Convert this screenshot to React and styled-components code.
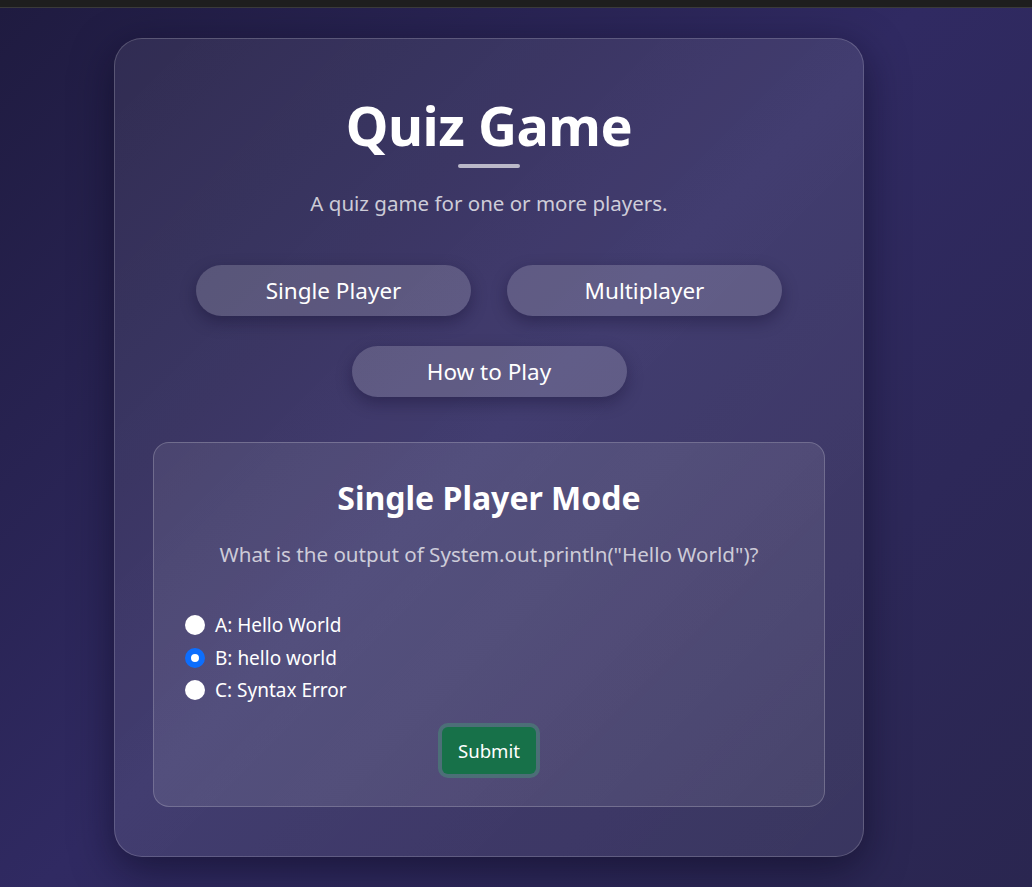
import React, { useState } from 'react'
import styled, { createGlobalStyle } from 'styled-components'

const GlobalStyle = createGlobalStyle`
  html, body {
    margin: 0;
    padding: 0;
    height: 100%;
    overflow: hidden;
  }
  body {
    font-family: "Noto Sans", "Open Sans", sans-serif;
    background: #1e1e1e;
  }
`;

const TopBar = styled.div`
  height: 7px;
  background: #1e1e1e;
  border-bottom: 1px solid #3a3a3a;
`;

const Page = styled.div`
  height: 879px;
  background: linear-gradient(135deg, #1f1b40 0%, #302a62 48%, #2a2650 100%);
  padding-top: 30px;
  box-sizing: border-box;
  overflow: hidden;
`;

const Card = styled.div`
  width: 750px;
  margin-left: 114px;
  box-sizing: border-box;
  padding: 54px 38px 49px;
  border-radius: 28px;
  border: 1px solid rgba(255, 255, 255, 0.18);
  background: linear-gradient(135deg, rgba(255,255,255,0.07), rgba(255,255,255,0.09) 50%, rgba(255,255,255,0.07));
  box-shadow: 0 12px 40px rgba(10, 8, 30, 0.55);
  display: flex;
  flex-direction: column;
  align-items: center;
`;

const Title = styled.h1`
  margin: 0;
  font-size: 54px;
  font-weight: 700;
  line-height: 64px;
  color: #ffffff;
  letter-spacing: -0.5px;
`;

const Rule = styled.div`
  width: 62px;
  height: 4px;
  border-radius: 2px;
  background: rgba(255, 255, 255, 0.65);
  margin-top: 7px;
`;

const Subtitle = styled.p`
  margin: 21px 0 0;
  font-size: 20.5px;
  color: rgba(255, 255, 255, 0.75);
`;

const ButtonGrid = styled.div`
  margin-top: 48px;
  display: flex;
  flex-wrap: wrap;
  justify-content: center;
  gap: 30px 36px;
  width: 600px;
`;

const MenuButton = styled.button`
  width: 275px;
  height: 51px;
  border: none;
  border-radius: 26px;
  background: rgba(255, 255, 255, 0.17);
  color: #ffffff;
  font-family: inherit;
  font-size: 22.5px;
  box-shadow: 0 6px 16px rgba(15, 10, 40, 0.35);
  cursor: pointer;
`;

const Panel = styled.div`
  align-self: stretch;
  margin-top: 45px;
  border-radius: 16px;
  border: 1px solid rgba(255, 255, 255, 0.2);
  background: linear-gradient(135deg, rgba(255,255,255,0.08), rgba(255,255,255,0.1) 50%, rgba(255,255,255,0.07));
  padding: 34px 31px 32px;
  display: flex;
  flex-direction: column;
`;

const PanelTitle = styled.h2`
  margin: 0;
  text-align: center;
  font-size: 32px;
  font-weight: 700;
  line-height: 42px;
  color: #ffffff;
`;

const Question = styled.p`
  margin: 21px 0 0;
  text-align: center;
  font-size: 20.6px;
  color: rgba(255, 255, 255, 0.72);
`;

const Options = styled.div`
  margin-top: 44px;
  display: flex;
  flex-direction: column;
  gap: 6px;
`;

const Option = styled.label`
  display: flex;
  align-items: center;
  gap: 10px;
  font-size: 19px;
  line-height: 26.5px;
  color: #ffffff;
  cursor: pointer;
`;

const RadioDot = styled.span`
  width: 20px;
  height: 20px;
  border-radius: 50%;
  box-sizing: border-box;
  background: #ffffff;
  border: ${p => (p.$checked ? '6px solid #0d6efd' : 'none')};
  flex-shrink: 0;
`;

const HiddenInput = styled.input`
  display: none;
`;

const SubmitRow = styled.div`
  margin-top: 23px;
  display: flex;
  justify-content: center;
`;

const SubmitButton = styled.button`
  width: 94px;
  height: 47px;
  border: none;
  border-radius: 6px;
  background: #177149;
  color: #ffffff;
  font-family: inherit;
  font-size: 18.6px;
  box-shadow: 0 0 0 4px rgba(72, 140, 120, 0.55);
  cursor: pointer;
`;

const FooterTab = styled.div`
  margin: 30px 0 0 449px;
  width: 61px;
  height: 6px;
  background: #5a3590;
`;

const options = [
  { id: 'a', label: 'A: Hello World' },
  { id: 'b', label: 'B: hello world' },
  { id: 'c', label: 'C: Syntax Error' },
];

const App = () => {
  const [choice, setChoice] = useState('b')

  return (
    <>
      <GlobalStyle />
      <TopBar />
      <Page>
        <Card>
          <Title>Quiz Game</Title>
          <Rule />
          <Subtitle>A quiz game for one or more players.</Subtitle>
          <ButtonGrid>
            <MenuButton>Single Player</MenuButton>
            <MenuButton>Multiplayer</MenuButton>
            <MenuButton>How to Play</MenuButton>
          </ButtonGrid>
          <Panel>
            <PanelTitle>Single Player Mode</PanelTitle>
            <Question>What is the output of System.out.println("Hello World")?</Question>
            <Options>
              {options.map(o => (
                <Option key={o.id}>
                  <HiddenInput
                    type="radio"
                    name="answer"
                    checked={choice === o.id}
                    onChange={() => setChoice(o.id)}
                  />
                  <RadioDot $checked={choice === o.id} />
                  {o.label}
                </Option>
              ))}
            </Options>
            <SubmitRow>
              <SubmitButton>Submit</SubmitButton>
            </SubmitRow>
          </Panel>
        </Card>
        <FooterTab />
      </Page>
    </>
  )
}

export default App
